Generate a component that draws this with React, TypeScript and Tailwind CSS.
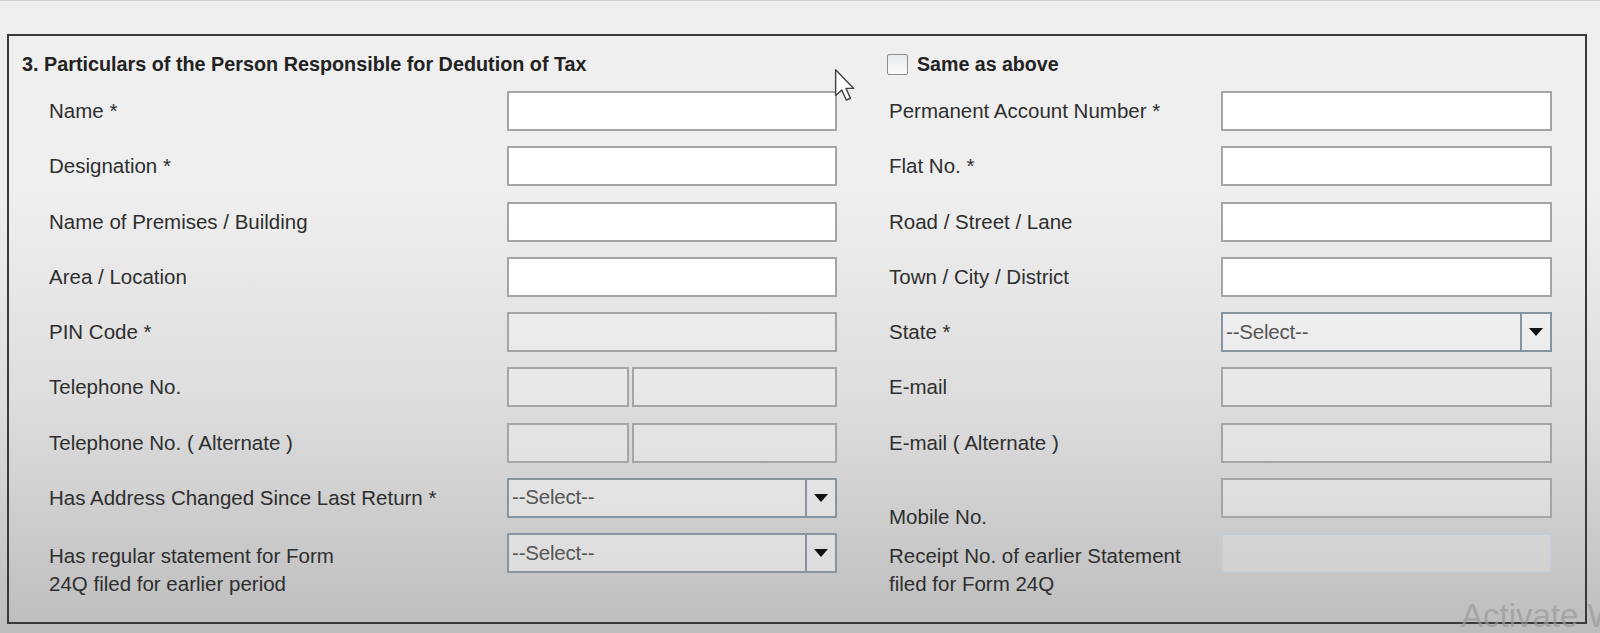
type Kind = 'text' | 'disabled' | 'phone' | 'select' | 'receipt';

interface Row {
  label: string[];
  kind: Kind;
  low?: boolean;
}

const leftRows: Row[] = [
  { label: ['Name *'], kind: 'text' },
  { label: ['Designation *'], kind: 'text' },
  { label: ['Name of Premises / Building'], kind: 'text' },
  { label: ['Area / Location'], kind: 'text' },
  { label: ['PIN Code *'], kind: 'disabled' },
  { label: ['Telephone No.'], kind: 'phone' },
  { label: ['Telephone No. ( Alternate )'], kind: 'phone' },
  { label: ['Has Address Changed Since Last Return *'], kind: 'select' },
  { label: ['Has regular statement for Form', '24Q filed for earlier period'], kind: 'select' },
];

const rightRows: Row[] = [
  { label: ['Permanent Account Number *'], kind: 'text' },
  { label: ['Flat No. *'], kind: 'text' },
  { label: ['Road / Street / Lane'], kind: 'text' },
  { label: ['Town / City / District'], kind: 'text' },
  { label: ['State *'], kind: 'select' },
  { label: ['E-mail'], kind: 'disabled' },
  { label: ['E-mail ( Alternate )'], kind: 'disabled' },
  { label: ['Mobile No.'], kind: 'disabled', low: true },
  { label: ['Receipt No. of earlier Statement', 'filed for Form 24Q'], kind: 'receipt' },
];

function SelectBox() {
  return (
    <div className="flex h-full w-full border-2 border-[#8994a1] bg-white/40">
      <div className="flex flex-1 items-center pl-[3px] text-[20.5px] text-[#555] tracking-[-0.2px]">--Select--</div>
      <div className="flex w-[30px] items-center justify-center border-l-2 border-[#8994a1]">
        <svg width="14" height="8" viewBox="0 0 14 8">
          <polygon points="0,0 14,0 7,8" fill="#111" />
        </svg>
      </div>
    </div>
  );
}

function Field({ kind }: { kind: Kind }) {
  if (kind === 'select') return <SelectBox />;
  if (kind === 'phone') {
    return (
      <div className="flex h-full w-full gap-[3px]">
        <div className="h-full w-[122px] border-2 border-[#a5a5a5] bg-white/30" />
        <div className="h-full flex-1 border-2 border-[#a5a5a5] bg-white/30" />
      </div>
    );
  }
  if (kind === 'receipt') return <div className="h-full w-full border-2 border-[#c6ccd3] bg-white/20" />;
  if (kind === 'disabled') return <div className="h-full w-full border-2 border-[#a5a5a5] bg-white/30" />;
  return <div className="h-full w-full border-2 border-[#a5a5a5] bg-white" />;
}

function FormRow({ row, labelWidth, fieldWidth }: { row: Row; labelWidth: string; fieldWidth: string }) {
  const multi = row.label.length > 1;
  return (
    <div className={`flex h-10 ${multi || row.low ? 'items-start' : 'items-center'}`}>
      <div
        className={`${labelWidth} shrink-0 text-[20.5px] text-[#2e2e2e] ${
          multi ? 'mt-[9px] leading-[28px]' : row.low ? 'mt-[27px] leading-6' : 'leading-6'
        }`}
      >
        {row.label.map((l) => (
          <div key={l}>{l}</div>
        ))}
      </div>
      <div className={`${fieldWidth} h-10 shrink-0`}>
        <Field kind={row.kind} />
      </div>
    </div>
  );
}

export default function App() {
  return (
    <div
      className="relative h-[633px] w-[1600px] overflow-hidden border-t border-[#cfcfcf] bg-linear-to-b from-[#efefef] from-30% via-[#dcdcdc] via-65% to-[#bdbdbd]"
      style={{ fontFamily: '"Liberation Sans", Arial, sans-serif' }}
    >
      <div className="ml-[7px] mt-[33px] grid h-[590px] w-[1580px] grid-cols-[878px_1fr] border-2 border-[#3a3a3a]">
        {/* Left column */}
        <div className="flex flex-col">
          <div className="h-[55px] pl-[13px] pt-[18px] text-[19.8px] font-bold leading-5 text-[#222]">
            3. Particulars of the Person Responsible for Dedution of Tax
          </div>
          <div className="flex flex-col gap-[15.25px] pl-[40px]">
            {leftRows.map((r) => (
              <FormRow key={r.label[0]} row={r} labelWidth="w-[458px]" fieldWidth="w-[330px]" />
            ))}
          </div>
        </div>

        {/* Right column */}
        <div className="flex flex-col">
          <div className="flex h-[55px] items-start pt-[18px]">
            <div className="h-[21px] w-[21px] rounded-[2px] border border-[#8e8e8e] bg-linear-to-b from-[#e6eaef] to-[#fafafa]" />
            <span className="ml-[9px] text-[19.6px] font-bold leading-5 text-[#222]">Same as above</span>
          </div>
          <div className="flex flex-col gap-[15.25px] pl-[2px]">
            {rightRows.map((r) => (
              <FormRow key={r.label[0]} row={r} labelWidth="w-[332px]" fieldWidth="w-[331px]" />
            ))}
          </div>
        </div>
      </div>

      {/* mouse cursor */}
      <svg className="absolute left-[834px] top-[67px]" width="21" height="34" viewBox="0 0 13 21">
        <path d="M1 1 L1 17 L4.8 13.6 L7.6 19.8 L10.2 18.7 L7.4 12.6 L12.2 12.6 Z" fill="#fff" stroke="#444" strokeWidth="0.9" strokeLinejoin="round" />
      </svg>

      {/* watermark */}
      <div className="pointer-events-none absolute left-[1461px] top-[597px] whitespace-nowrap text-[33px] font-light leading-9 text-[#9a9a9a]/70">
        Activate W
      </div>
    </div>
  );
}
